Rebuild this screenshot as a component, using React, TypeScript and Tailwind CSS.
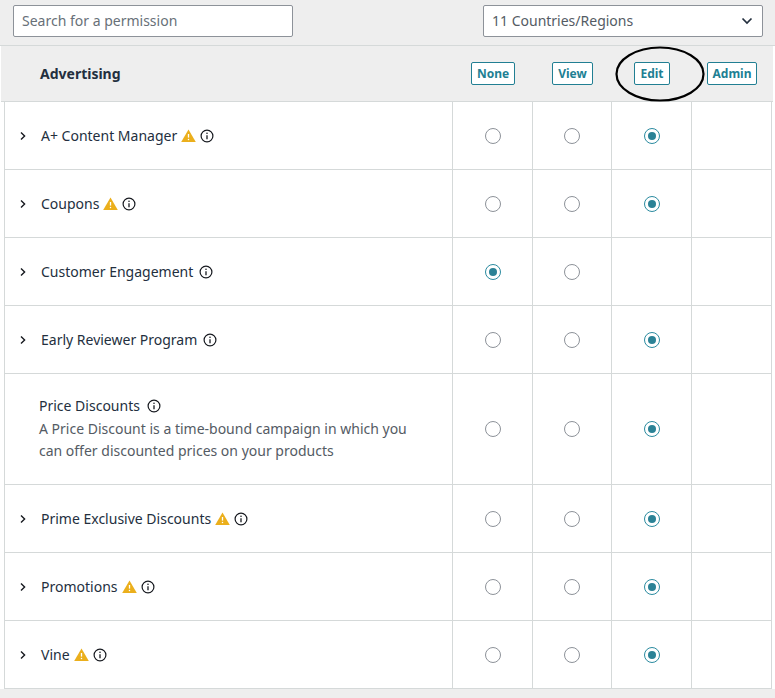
const rows = [
  { name: "A+ Content Manager", warn: true, value: "edit" },
  { name: "Coupons", warn: true, value: "edit" },
  { name: "Customer Engagement", warn: false, value: "none", noEdit: true },
  { name: "Early Reviewer Program", warn: false, value: "edit" },
  {
    name: "Price Discounts",
    warn: false,
    value: "edit",
    desc: "A Price Discount is a time-bound campaign in which you can offer discounted prices on your products",
  },
  { name: "Prime Exclusive Discounts", warn: true, value: "edit" },
  { name: "Promotions", warn: true, value: "edit" },
  { name: "Vine", warn: true, value: "edit" },
];

function Info() {
  return (
    <svg width="14" height="14" viewBox="0 0 14 14" fill="none" className="shrink-0 text-[#16191f]">
      <circle cx="7" cy="7" r="5.9" stroke="currentColor" strokeWidth="1.2" />
      <circle cx="7" cy="4.3" r="0.8" fill="currentColor" />
      <path d="M7 6.2v4" stroke="currentColor" strokeWidth="1.3" />
    </svg>
  );
}

function Warn() {
  return (
    <svg width="15" height="13" viewBox="0 0 15 13" className="shrink-0">
      <path d="M7.5 0.5L14.8 13H0.2z" fill="#ebaf1c" />
      <path d="M7.5 5v3.6" stroke="#fff" strokeWidth="1.3" />
      <circle cx="7.5" cy="10.4" r="0.75" fill="#fff" />
    </svg>
  );
}

function Chevron() {
  return (
    <svg width="8" height="10" viewBox="0 0 8 10" fill="none" className="shrink-0">
      <path d="M2 1.5L5.6 5L2 8.5" stroke="#16191f" strokeWidth="1.4" />
    </svg>
  );
}

function Radio({ on }: { on: boolean }) {
  return (
    <span
      className={
        "flex h-4 w-4 items-center justify-center rounded-full border bg-white " +
        (on ? "border-[#2b8ba0]" : "border-[#8d9299]")
      }
    >
      {on && <span className="h-2 w-2 rounded-full bg-[#2b8296]" />}
    </span>
  );
}

function HeadButton({ label }: { label: string }) {
  return (
    <div className="flex items-center justify-center">
      <span className="flex h-[23px] items-center rounded-[2px] border border-[#217f93] bg-white px-[5px] text-xs font-bold text-[#217f93]">
        {label}
      </span>
    </div>
  );
}

export default function App() {
  return (
    <div className="relative h-[698px] w-[775px] overflow-hidden bg-white font-['Noto_Sans',sans-serif] text-sm text-[#232f3e]">
      <div className="flex h-[46px] items-start justify-between border-b border-[#d5d9d9] bg-[#eeeeee] pl-[13px] pr-3 pt-[5px]">
        <div className="flex h-8 w-[280px] items-center rounded-[2px] border border-[#8d9299] bg-white px-2 text-[#687078]">
          Search for a permission
        </div>
        <div className="flex h-8 w-[280px] items-center justify-between rounded-[2px] border border-[#8d9299] bg-white pl-2 pr-[9px] text-[#545b64]">
          <span>11 Countries/Regions</span>
          <svg width="12" height="8" viewBox="0 0 12 8" fill="none">
            <path d="M1.5 1.5L6 6l4.5-4.5" stroke="#232f3e" strokeWidth="1.7" />
          </svg>
        </div>
      </div>

      <div className="ml-1 w-[768px] border-l border-r border-[#d5d9d9]">
        <div className="-ml-1 grid h-[56px] w-[772px] grid-cols-[452px_80px_79px_80px_80px] items-center border-b border-[#d5d9d9] bg-[#eeeeee]">
          <div className="pl-[39px] font-bold">Advertising</div>
          <HeadButton label="None" />
          <HeadButton label="View" />
          <HeadButton label="Edit" />
          <HeadButton label="Admin" />
        </div>

        {rows.map((row) => (
          <div
            key={row.name}
            className={
              "grid grid-cols-[447px_80px_79px_80px_80px] border-b border-[#d5d9d9] " +
              (row.desc ? "h-[111px]" : "h-[68px]")
            }
          >
            {row.desc ? (
              <div className="flex flex-col justify-center pl-[34px] pr-6">
                <div className="flex items-center gap-[7px] leading-[20px]">
                  {row.name}
                  <Info />
                </div>
                <p className="mt-[2px] leading-[22px] text-[#545b64]">{row.desc}</p>
              </div>
            ) : (
              <div className="flex items-center pl-[14px]">
                <Chevron />
                <span className="ml-[14px]">{row.name}</span>
                <span className={"flex items-center " + (row.warn ? "ml-[4px] gap-[4px]" : "ml-[6px]")}>
                  {row.warn && <Warn />}
                  <Info />
                </span>
              </div>
            )}
            <div className="flex items-center justify-center border-l border-[#d5d9d9]">
              <Radio on={row.value === "none"} />
            </div>
            <div className="flex items-center justify-center border-l border-[#d5d9d9]">
              <Radio on={false} />
            </div>
            <div className="flex items-center justify-center border-l border-[#d5d9d9]">
              {!row.noEdit && <Radio on={row.value === "edit"} />}
            </div>
            <div className="border-l border-[#d5d9d9]" />
          </div>
        ))}
      </div>

      <div className="h-3 bg-[#eeeeee]" />

      <svg width="92" height="60" viewBox="0 0 92 60" fill="none" className="absolute left-[614px] top-[44px]">
        <ellipse cx="46" cy="30" rx="43.5" ry="26.5" stroke="#000" strokeWidth="2.2" />
      </svg>
    </div>
  );
}
